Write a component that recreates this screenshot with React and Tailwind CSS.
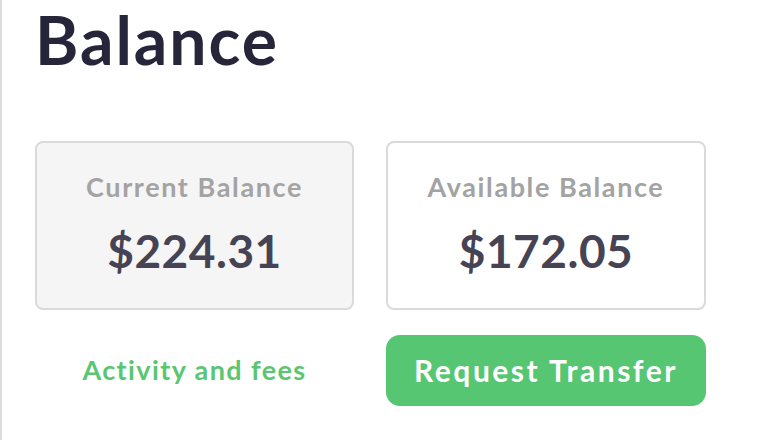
import React from "react";

const cards = [
  { label: "Current Balance", amount: "$224.31", muted: true },
  { label: "Available Balance", amount: "$172.05", muted: false },
];

const App = () => {
  return (
    <div
      className="w-[760px] h-[440px] bg-white border-l-2 border-[#dcdcdc] pl-[33px] pt-[5px]"
      style={{ fontFamily: "Lato, 'Noto Sans', sans-serif" }}
    >
      <h1 className="text-[66px] font-bold leading-[70px] text-[#26253a] tracking-[2px]">Balance</h1>

      <div className="grid grid-cols-[319px_320px] gap-x-[32px] mt-[66px]">
        {cards.map((card) => (
          <div
            key={card.label}
            className={`h-[169px] rounded-[8px] border-2 border-[#dadada] flex flex-col items-center pt-[28px] ${
              card.muted ? "bg-[#f5f5f5]" : "bg-white"
            }`}
          >
            <span className="text-[27px] font-bold text-[#a3a3a3] leading-[32px] tracking-[1.6px]">{card.label}</span>
            <span className="text-[46px] font-bold text-[#454354] leading-[50px] mt-[23px] tracking-[0.5px]">{card.amount}</span>
          </div>
        ))}

        {/* Actions */}
        <div className="flex items-center justify-center mt-[25px] h-[71px]">
          <a href="#" className="text-[27px] font-bold text-[#5ac672] tracking-[1.4px]">Activity and fees</a>
        </div>
        <button
          type="button"
          className="mt-[25px] h-[71px] rounded-[14px] bg-[#56c673] text-white text-[30px] font-bold tracking-[2.5px]"
        >
          Request Transfer
        </button>
      </div>
    </div>
  );
};

export default App;
